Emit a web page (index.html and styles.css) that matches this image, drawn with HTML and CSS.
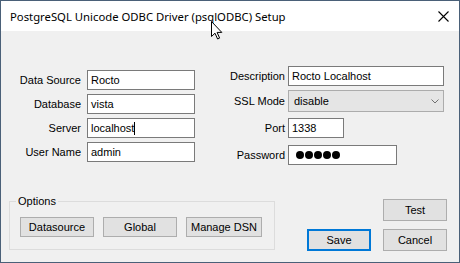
FILE: index.html
```html
<!DOCTYPE html>
<html lang="en">
<head>
    <meta charset="UTF-8">
    <title>PostgreSQL Unicode ODBC Driver (psqlODBC) Setup</title>
    <link rel="stylesheet" href="styles.css">
</head>
<body>
    <div class="window">
        <!-- Title bar -->
        <div class="titlebar">
            <span class="title">PostgreSQL Unicode ODBC Driver (psqlODBC) Setup</span>
            <svg class="close" viewBox="0 0 11 11">
                <path d="M0.5 0.5 L10.5 10.5 M10.5 0.5 L0.5 10.5" stroke="#000" stroke-width="1.1" fill="none"/>
            </svg>
        </div>

        <div class="content">
            <!-- Connection fields -->
            <div class="form">
                <div class="col col-left">
                    <div class="row"><span class="label">Data Source</span><div class="field">Rocto</div></div>
                    <div class="row"><span class="label">Database</span><div class="field">vista</div></div>
                    <div class="row"><span class="label">Server</span><div class="field">localhost<span class="caret"></span></div></div>
                    <div class="row"><span class="label">User Name</span><div class="field">admin</div></div>
                </div>
                <div class="col col-right">
                    <div class="row"><span class="label">Description</span><div class="field">Rocto Localhost</div></div>
                    <div class="row row-ssl">
                        <span class="label">SSL Mode</span>
                        <div class="field select">
                            <span>disable</span>
                            <svg class="chevron" viewBox="0 0 8 5"><path d="M0.5 0.5 L4 4 L7.5 0.5" stroke="#707070" fill="none"/></svg>
                        </div>
                    </div>
                    <div class="row row-port"><span class="label">Port</span><div class="field port">1338</div></div>
                    <div class="row row-pass">
                        <span class="label">Password</span>
                        <div class="field pass">
                            <span class="dot"></span><span class="dot"></span><span class="dot"></span><span class="dot"></span><span class="dot"></span>
                        </div>
                    </div>
                </div>
            </div>

            <!-- Options and actions -->
            <div class="bottom">
                <fieldset class="options">
                    <legend>Options</legend>
                    <button class="btn opt">Datasource</button>
                    <button class="btn opt">Global</button>
                    <button class="btn opt wide">Manage DSN</button>
                </fieldset>
                <div class="actions">
                    <button class="btn act test">Test</button>
                    <button class="btn act save">Save</button>
                    <button class="btn act">Cancel</button>
                </div>
            </div>
        </div>

        <!-- Mouse pointer -->
        <svg class="pointer" width="12" height="19" viewBox="0 0 12 19">
            <path d="M0.5 0.5 L0.5 15.5 L4 12.2 L6.6 18 L8.6 17.1 L6.1 11.4 L10.8 11.4 Z" fill="#fff" stroke="#000" stroke-width="1" stroke-linejoin="miter"/>
        </svg>
    </div>
</body>
</html>
```

FILE: styles.css
```css
/* General */
* {
    box-sizing: border-box;
}
body {
    margin: 0;
    background: #fff;
    font-family: "Liberation Sans", Arial, sans-serif;
    font-size: 11px;
    color: #000;
}
.window {
    position: relative;
    width: 460px;
    height: 263px;
    border: 1px solid #4a6078;
    background: #f0f0f0;
    display: flex;
    flex-direction: column;
}

/* Title bar */
.titlebar {
    height: 30px;
    background: #fff;
    display: flex;
    align-items: center;
    justify-content: space-between;
    padding-left: 9px;
    font-family: "Noto Sans", sans-serif;
    font-size: 11.3px;
}
.close {
    width: 11px;
    height: 11px;
    margin-right: 10px;
}

/* Form */
.content {
    flex: 1;
    display: flex;
    flex-direction: column;
}
.form {
    display: flex;
    align-items: flex-start;
}
.col {
    display: flex;
    flex-direction: column;
}
.col-left {
    padding: 39px 0 0 8px;
    gap: 4px;
}
.col-left .label {
    width: 72px;
}
.col-left .field {
    width: 108px;
}
.col-right {
    padding-top: 35px;
    margin-left: 27px;
}
.col-right .label {
    width: 63px;
}
.col-right .field {
    width: 156px;
}
.row {
    display: flex;
    align-items: center;
    gap: 6px;
    height: 20px;
}
.col-right .row {
    gap: 3px;
}
.row-ssl {
    height: 22px;
    margin-top: 4px;
}
.row-port {
    margin-top: 6px;
}
.row-pass {
    margin-top: 7px;
}
.label {
    text-align: right;
    white-space: nowrap;
}
.field {
    height: 20px;
    background: #fff;
    border: 1px solid #7a7a7a;
    padding-left: 3px;
    line-height: 18px;
    white-space: nowrap;
}
.caret {
    display: inline-block;
    width: 1px;
    height: 13px;
    background: #000;
    vertical-align: -3px;
}
.col-right .select {
    height: 22px;
    background: #e5e5e5;
    border-color: #acacac;
    padding: 0 4px 0 5px;
    display: flex;
    align-items: center;
    justify-content: space-between;
}
.chevron {
    width: 8px;
    height: 5px;
}
.col-right .port {
    width: 56px;
}
.col-right .pass {
    width: 109px;
    padding-left: 7px;
    display: flex;
    align-items: center;
    gap: 1px;
}
.dot {
    width: 8px;
    height: 8px;
    border-radius: 50%;
    background: #000;
}

/* Bottom area */
.bottom {
    margin-top: auto;
    display: flex;
    justify-content: space-between;
    align-items: flex-end;
    padding: 0 12px 11px 8px;
}
.options {
    width: 266px;
    margin: 0 0 1px;
    border: 1px solid #dcdcdc;
    padding: 9px 10px 12px;
    display: flex;
    gap: 9px;
}
.options legend {
    padding: 0 2px;
    margin-left: -4px;
    line-height: 13px;
}
.btn {
    height: 20px;
    padding: 0;
    background: #e1e1e1;
    border: 1px solid #adadad;
    font: inherit;
    color: #000;
}
.opt {
    width: 74px;
}
.opt.wide {
    width: 76px;
}
.actions {
    display: grid;
    grid-template-columns: 64px 64px;
    gap: 8px 12px;
}
.act {
    height: 22px;
}
.test {
    grid-column: 2;
}
.save {
    border: 2px solid #0078d7;
}

/* Mouse pointer over the title */
.pointer {
    position: absolute;
    left: 210px;
    top: 20px;
}
```
